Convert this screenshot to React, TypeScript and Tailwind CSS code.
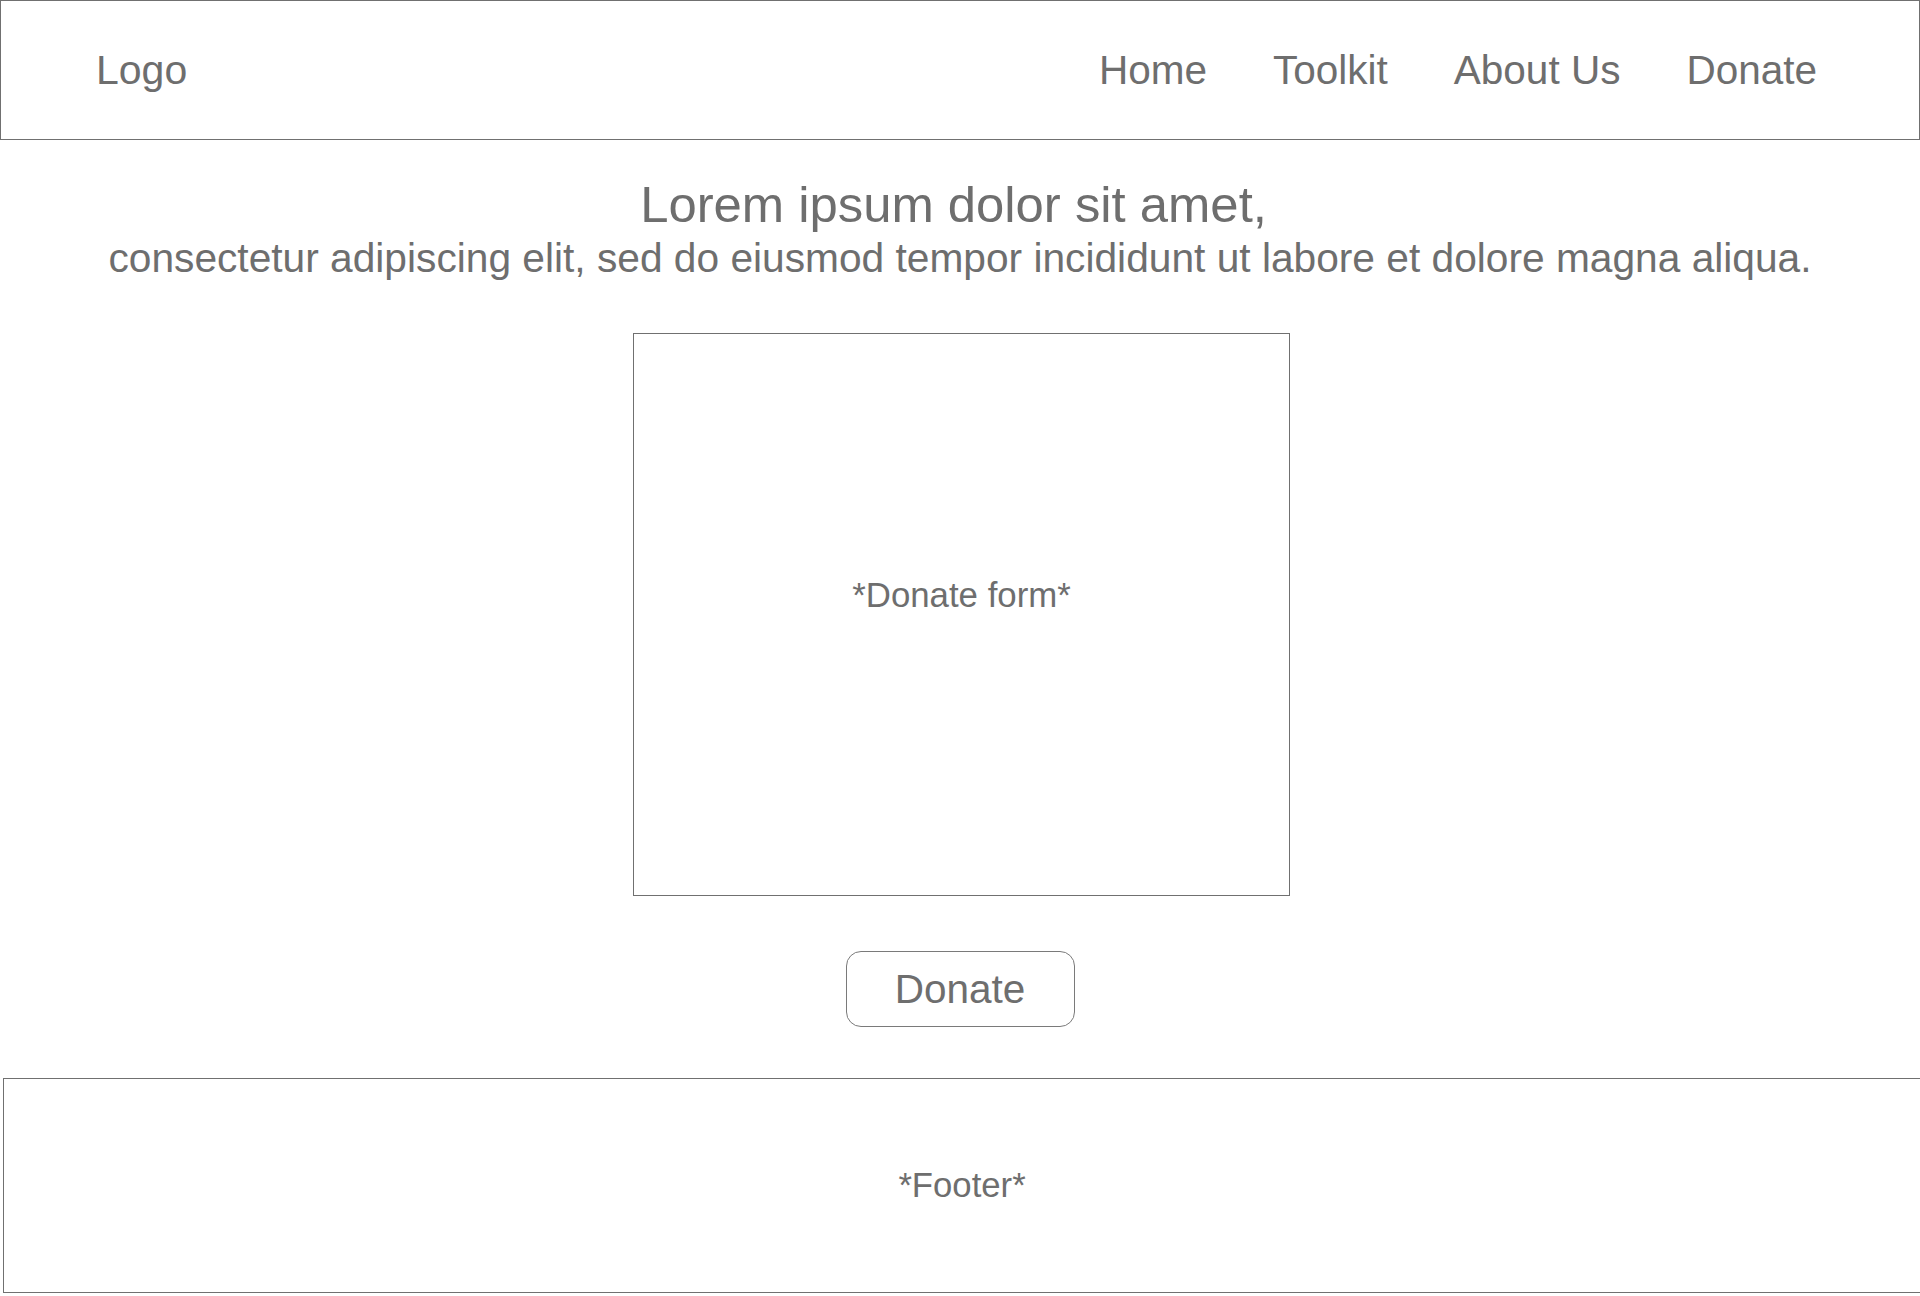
const navLinks = ["Home", "Toolkit", "About Us", "Donate"];

export default function App() {
  return (
    <div className="flex h-[1296px] flex-col overflow-hidden bg-white font-['Liberation_Sans',Arial,sans-serif] text-[#6e6e6e]">
      <header className="flex h-[140px] shrink-0 items-center justify-between border border-[#707070] pl-[95px] pr-[102px]">
        <a href="#" className="text-[41px] leading-none">
          Logo
        </a>
        <nav className="flex items-center gap-[66px]">
          {navLinks.map((link) => (
            <a key={link} href="#" className="text-[40.5px] leading-none">
              {link}
            </a>
          ))}
        </nav>
      </header>

      <main className="flex flex-col items-center pt-[37px]">
        <h1 className="pr-[13px] text-[50.8px] leading-[56px]">Lorem ipsum dolor sit amet,</h1>
        <p className="text-[40.7px] leading-[51px]">
          consectetur adipiscing elit, sed do eiusmod tempor incididunt ut labore et dolore magna aliqua.
        </p>

        <div className="ml-[3px] mt-[49px] flex h-[563px] w-[657px] flex-col items-center border border-[#707070] pt-[241px]">
          <span className="text-[34.8px] leading-[40px]">*Donate form*</span>
        </div>

        <button className="mt-[55px] flex h-[76px] w-[229px] items-center justify-center rounded-[15px] border border-[#7a7a7a] text-[40.5px] leading-none">
          Donate
        </button>
      </main>

      <footer className="ml-[3px] mt-[51px] flex h-[215px] shrink-0 items-center justify-center border-y border-l border-[#707070]">
        <span className="text-[34.7px] leading-none">*Footer*</span>
      </footer>
    </div>
  );
}
